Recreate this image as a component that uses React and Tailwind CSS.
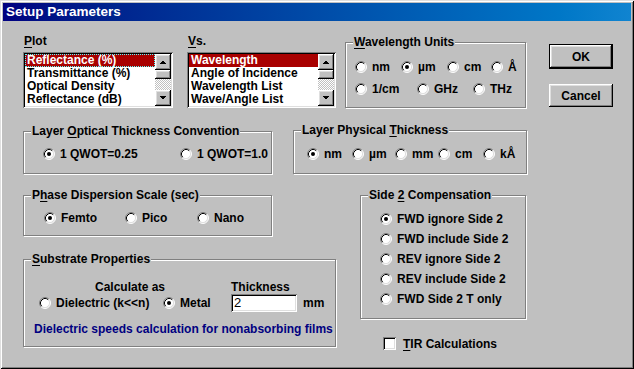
import React from 'react';

const raised =
  'bg-[#c0c0c0] shadow-[inset_-1px_-1px_0_#000,inset_1px_1px_0_#fff,inset_-2px_-2px_0_#808080,inset_2px_2px_0_#dfdfdf]';
const sunken =
  'shadow-[inset_1px_1px_0_#808080,inset_-1px_-1px_0_#fff,inset_2px_2px_0_#000,inset_-2px_-2px_0_#dfdfdf]';

const Radio = ({ on }) => (
  <svg width="12" height="12" viewBox="0 0 12 12" className="shrink-0">
    <circle cx="6" cy="6" r="5" fill="#fff" />
    <path d="M2.11 9.89A5.5 5.5 0 0 1 9.89 2.11" stroke="#808080" fill="none" />
    <path d="M9.89 2.11A5.5 5.5 0 0 1 2.11 9.89" stroke="#fff" fill="none" />
    <path d="M2.82 9.18A4.5 4.5 0 0 1 9.18 2.82" stroke="#000" fill="none" />
    <path d="M9.18 2.82A4.5 4.5 0 0 1 2.82 9.18" stroke="#dfdfdf" fill="none" />
    {on && <circle cx="6" cy="6" r="2" fill="#000" />}
  </svg>
);

// one radio + caption, the width fixes where the next option starts
const Opt = ({ on, w, children }) => (
  <div className={`flex items-center h-[14px] shrink-0 ${w || ''}`}>
    <Radio on={on} />
    <span className="ml-[5px] whitespace-nowrap">{children}</span>
  </div>
);

const Group = ({ label, className, children }) => (
  <div
    className={`relative border border-[#808080] shadow-[inset_1px_1px_0_#fff,1px_1px_0_#fff] ${className}`}
  >
    <span className="absolute left-[7px] top-[-8px] px-[1px] bg-[#c0c0c0] leading-[14px] whitespace-nowrap">
      {label}
    </span>
    {children}
  </div>
);

const Arrow = ({ down }) => (
  <svg width="16" height="16" viewBox="0 0 16 16" shapeRendering="crispEdges">
    {down ? <polygon points="4,6 11,6 7.5,9.5" fill="#000" /> : <polygon points="4,10 11,10 7.5,6.5" fill="#000" />}
  </svg>
);

const ScrollBar = () => (
  <div className="flex flex-col w-[16px] h-full shrink-0">
    <div className={`h-[16px] ${raised}`}>
      <Arrow />
    </div>
    <div className={`h-[9px] ${raised}`} />
    <div className="flex-1 bg-[image:repeating-conic-gradient(#fff_0_25%,#c0c0c0_0_50%)] bg-[length:2px_2px]" />
    <div className={`h-[16px] ${raised}`}>
      <Arrow down />
    </div>
  </div>
);

const ListBox = ({ items, width, focus }) => (
  <div className={`flex mt-[4px] h-[56px] p-[2px] bg-white ${sunken} ${width}`}>
    <div className="flex-1 flex flex-col">
      {items.map((it, i) => (
        <div
          key={it}
          className={`h-[13px] leading-[13px] pl-[2px] whitespace-nowrap ${
            i === 0 ? 'bg-[#a80000] text-white' : ''
          } ${i === 0 && focus ? 'outline-1 outline-dotted outline-[#55ffff] -outline-offset-1' : ''}`}
        >
          {it}
        </div>
      ))}
    </div>
    <ScrollBar />
  </div>
);

const U = ({ children }) => <span className="underline underline-offset-2">{children}</span>;

export default function App() {
  return (
    <div className="w-[634px] h-[369px] overflow-hidden bg-[#c0c0c0] text-black text-[12px] leading-[14px] font-bold font-['Liberation_Sans',Arial,sans-serif] shadow-[inset_1px_1px_0_#dfdfdf,inset_-1px_-1px_0_#000,inset_2px_2px_0_#fff,inset_-2px_-2px_0_#808080]">
      {/* title bar */}
      <div className="mx-[3px] mt-[3px] h-[18px] pl-[3px] bg-linear-to-r from-[#000080] to-[#1084d0] text-white text-[13.5px] leading-[18px]">
        Setup Parameters
      </div>

      <div className="pl-[23px]">
        {/* row 1 */}
        <div className="flex items-start mt-[13px]">
          <div className="w-[150px] shrink-0">
            <div className="h-[14px] pl-[1px]">
              <U>P</U>lot
            </div>
            <ListBox
              width="w-[150px]"
              focus
              items={['Reflectance (%)', 'Transmittance (%)', 'Optical Density', 'Reflectance (dB)']}
            />
          </div>

          <div className="w-[149px] ml-[14px] shrink-0">
            <div className="h-[14px] pl-[1px]">
              <U>V</U>s.
            </div>
            <ListBox
              width="w-[149px]"
              items={['Wavelength', 'Angle of Incidence', 'Wavelength List', 'Wave/Angle List']}
            />
          </div>

          <Group
            className="ml-[9px] mt-[8px] w-[181px] h-[66px] shrink-0 pt-[17px] pl-[9px]"
            label={
              <>
                <U>W</U>avelength Units
              </>
            }
          >
            <div className="flex">
              <Opt w="w-[46px]">nm</Opt>
              <Opt w="w-[46px]" on>
                µm
              </Opt>
              <Opt w="w-[44px]">cm</Opt>
              <Opt>Å</Opt>
            </div>
            <div className="flex mt-[8px]">
              <Opt w="w-[62px]">1/cm</Opt>
              <Opt w="w-[56px]">GHz</Opt>
              <Opt>THz</Opt>
            </div>
          </Group>

          <div className="ml-[23px] mt-[10px] w-[64px] flex flex-col shrink-0">
            <div className="h-[25px] border border-black">
              <div className={`h-full flex items-center justify-center ${raised}`}>OK</div>
            </div>
            <div className={`mt-[15px] h-[23px] flex items-center justify-center ${raised}`}>Cancel</div>
          </div>
        </div>

        {/* row 2 */}
        <div className="flex items-start mt-[22px]">
          <Group
            className="mt-[1px] w-[249px] h-[43px] shrink-0 pt-[15px] pl-[19px] flex"
            label={
              <>
                Layer <U>O</U>ptical Thickness Convention
              </>
            }
          >
            <Opt w="w-[137px]" on>
              1 QWOT=0.25
            </Opt>
            <Opt>1 QWOT=1.0</Opt>
          </Group>

          <Group
            className="ml-[21px] w-[234px] h-[44px] shrink-0 pt-[16px] pl-[13px] flex"
            label={
              <>
                Layer Physical <U>T</U>hickness
              </>
            }
          >
            <Opt w="w-[45px]" on>
              nm
            </Opt>
            <Opt w="w-[43px]">µm</Opt>
            <Opt w="w-[43px]">mm</Opt>
            <Opt w="w-[45px]">cm</Opt>
            <Opt>kÅ</Opt>
          </Group>
        </div>

        {/* row 3 */}
        <div className="flex items-start mt-[21px]">
          <div className="w-[313px] shrink-0">
            <Group
              className="w-[249px] h-[41px] pt-[15px] pl-[20px] flex"
              label={
                <>
                  P<U>h</U>ase Dispersion Scale (sec)
                </>
              }
            >
              <Opt w="w-[81px]" on>
                Femto
              </Opt>
              <Opt w="w-[72px]">Pico</Opt>
              <Opt>Nano</Opt>
            </Group>

            <Group
              className="mt-[23px] w-[313px] h-[88px] pt-[20px] pl-[15px]"
              label={
                <>
                  <U>S</U>ubstrate Properties
                </>
              }
            >
              <div className="flex h-[14px]">
                <div className="w-[192px] pl-[56px] shrink-0">Calculate as</div>
                <div>Thickness</div>
              </div>
              <div className="flex items-center h-[18px]">
                <Opt w="w-[124px]">Dielectric (k&lt;&lt;n)</Opt>
                <Opt w="w-[68px]" on>
                  Metal
                </Opt>
                <div className={`w-[66px] h-[18px] bg-white pl-[3px] pt-[2px] font-normal text-[13px] ${sunken}`}>2</div>
                <span className="ml-[6px]">mm</span>
              </div>
              <div className="mt-[10px] ml-[-5px] text-[#000080] whitespace-nowrap">
                Dielectric speeds calculation for nonabsorbing films
              </div>
            </Group>
          </div>

          <div className="ml-[24px] shrink-0">
            <Group
              className="w-[166px] h-[124px] pt-[16px] pl-[19px] flex flex-col gap-[6px]"
              label={
                <>
                  Side <U>2</U> Compensation
                </>
              }
            >
              <Opt on>FWD ignore Side 2</Opt>
              <Opt>FWD include Side 2</Opt>
              <Opt>REV ignore Side 2</Opt>
              <Opt>REV include Side 2</Opt>
              <Opt>FWD Side 2 T only</Opt>
            </Group>

            <div className="flex items-center mt-[18px] ml-[23px] h-[13px]">
              <div className={`w-[13px] h-[13px] bg-white shrink-0 ${sunken}`} />
              <span className="ml-[7px]">
                <U>T</U>IR Calculations
              </span>
            </div>
          </div>
        </div>
      </div>
    </div>
  );
}
